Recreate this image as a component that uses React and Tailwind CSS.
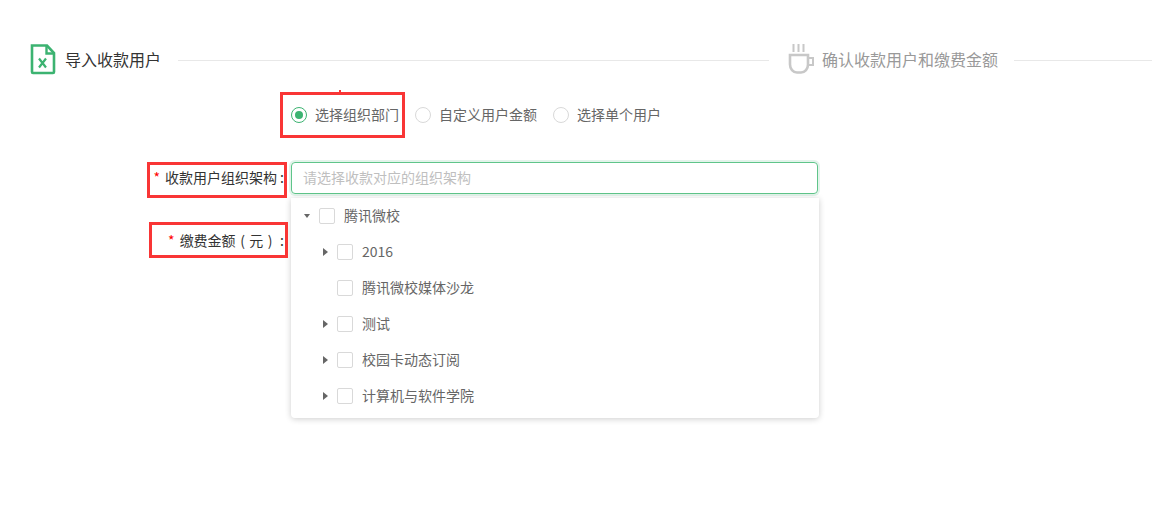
import React from "react";

const treeRows = [
  { name: "2016", arrow: true },
  { name: "腾讯微校媒体沙龙", arrow: false },
  { name: "测试", arrow: true },
  { name: "校园卡动态订阅", arrow: true },
  { name: "计算机与软件学院", arrow: true },
];

function ExcelIcon() {
  return (
    <svg width="26" height="32" viewBox="0 0 26 32" fill="none" className="shrink-0">
      <path d="M2 1.500h15l7 7.500V28a1 1 0 0 1-1 1H3a1 1 0 0 1-1-1V1.500z" stroke="#3cb371" strokeWidth="2.600" />
      <path d="M16.500 1.500v8h7.500" stroke="#3cb371" strokeWidth="2.400" />
      <path d="M9 14.500l7 9M16 14.500l-7 9" stroke="#3cb371" strokeWidth="2.200" />
    </svg>
  );
}

function CupIcon() {
  return (
    <svg width="26" height="32" viewBox="0 0 26 32" fill="none" className="shrink-0">
      <path d="M5.500 0v8M10.500 0v8M15.500 0v8" stroke="#c8c8c8" strokeWidth="2" />
      <path d="M2 11h18v9.500c0 4.500-3 8-7 8H9c-4 0-7-3.500-7-8V11z" stroke="#c8c8c8" strokeWidth="2.600" />
      <path d="M20 14h5v7h-5" stroke="#c8c8c8" strokeWidth="2" />
    </svg>
  );
}

function Radio({ checked, label }) {
  return (
    <label className="flex items-center">
      <span
        className={`flex h-4 w-4 items-center justify-center rounded-full border ${
          checked ? "border-[#3cb371]" : "border-[#d9d9d9]"
        }`}
      >
        {checked && <span className="h-2 w-2 rounded-full bg-[#3cb371]" />}
      </span>
      <span className="ml-2 pb-[2px] text-sm text-[#666]">{label}</span>
    </label>
  );
}

function Checkbox() {
  return <span className="block h-4 w-4 shrink-0 rounded-[2px] border border-[#d9d9d9] bg-white" />;
}

function RedBox({ className }) {
  return <div className={`pointer-events-none absolute border-[3px] border-[#f93535] ${className}`} />;
}

export default function App() {
  return (
    <div
      className="relative h-[516px] w-[1152px] overflow-hidden bg-white text-[#333]"
      style={{ fontFamily: '"Noto Sans CJK SC", "Liberation Sans", sans-serif' }}
    >
      {/* 步骤条 */}
      <div className="flex items-center pl-[30px] pt-[44px]">
        <ExcelIcon />
        <span className="ml-[9px] pb-[2px] text-base leading-[30px]">导入收款用户</span>
        <div className="ml-[17px] h-px w-[591px] bg-[#e8e8e8]" />
        <div className="ml-[19px]">
          <CupIcon />
        </div>
        <span className="ml-[8px] pb-[2px] text-base leading-[30px] text-[#999]">确认收款用户和缴费金额</span>
        <div className="ml-[16px] h-px flex-1 bg-[#e8e8e8]" />
      </div>

      {/* 表单 */}
      <div className="ml-[291px] mt-[31px] flex h-4 w-[527px] items-center gap-4">
        <Radio checked label="选择组织部门" />
        <Radio label="自定义用户金额" />
        <Radio label="选择单个用户" />
      </div>

      <div className="mt-[39px] flex">
        <div className="flex w-[291px] flex-col items-end pr-[7px] text-sm text-[#333]">
          <div className="flex h-8 items-center pb-[2px]">
            <span className="mr-[5px] text-[#f00]">*</span>收款用户组织架构<span className="ml-[3px]">:</span>
          </div>
          <div className="mt-[31px] flex h-8 items-center pb-[2px]">
            <span className="mr-[5px] text-[#f00]">*</span>缴费金额<span className="mx-[4.5px]">(</span>元
            <span className="mx-[4.5px]">)</span><span className="ml-[3px]">:</span>
          </div>
        </div>
        <div className="w-[528px]">
          <div className="flex h-8 w-[527px] items-center rounded border border-[#5fc58a] px-[11px] pb-[2px] text-sm text-[#bfbfbf] shadow-[0_0_0_2px_rgba(60,179,113,0.14)]">
            请选择收款对应的组织架构
          </div>
          <div className="mt-1 rounded-b bg-white pb-1 shadow-[0_1px_6px_rgba(0,0,0,0.2)]">
            <div className="flex h-9 items-center pl-[13px] text-sm text-[#666]">
              <span className="h-0 w-0 border-x-[3px] border-t-[4px] border-x-transparent border-t-[#666]" />
              <span className="ml-[9px]">
                <Checkbox />
              </span>
              <span className="ml-[9px] pb-[2px]">腾讯微校</span>
            </div>
            {treeRows.map((row) => (
              <div key={row.name} className="flex h-9 items-center pl-[32px] text-sm text-[#666]">
                <span
                  className={`h-0 w-0 border-y-4 border-l-[5px] border-y-transparent ${
                    row.arrow ? "border-l-[#666]" : "border-l-transparent"
                  }`}
                />
                <span className="ml-[9px]">
                  <Checkbox />
                </span>
                <span className="ml-[9px] pb-[2px]">{row.name}</span>
              </div>
            ))}
          </div>
        </div>
      </div>

      {/* 标注框 */}
      <RedBox className="left-[280px] top-[92px] h-[46px] w-[125px]" />
      <RedBox className="left-[147px] top-[162px] h-[36px] w-[140px]" />
      <RedBox className="left-[149px] top-[222px] h-[36px] w-[139px]" />
      <div className="absolute left-[339px] top-[90px] h-[2px] w-[2px] bg-[#f93535]" />
    </div>
  );
}
